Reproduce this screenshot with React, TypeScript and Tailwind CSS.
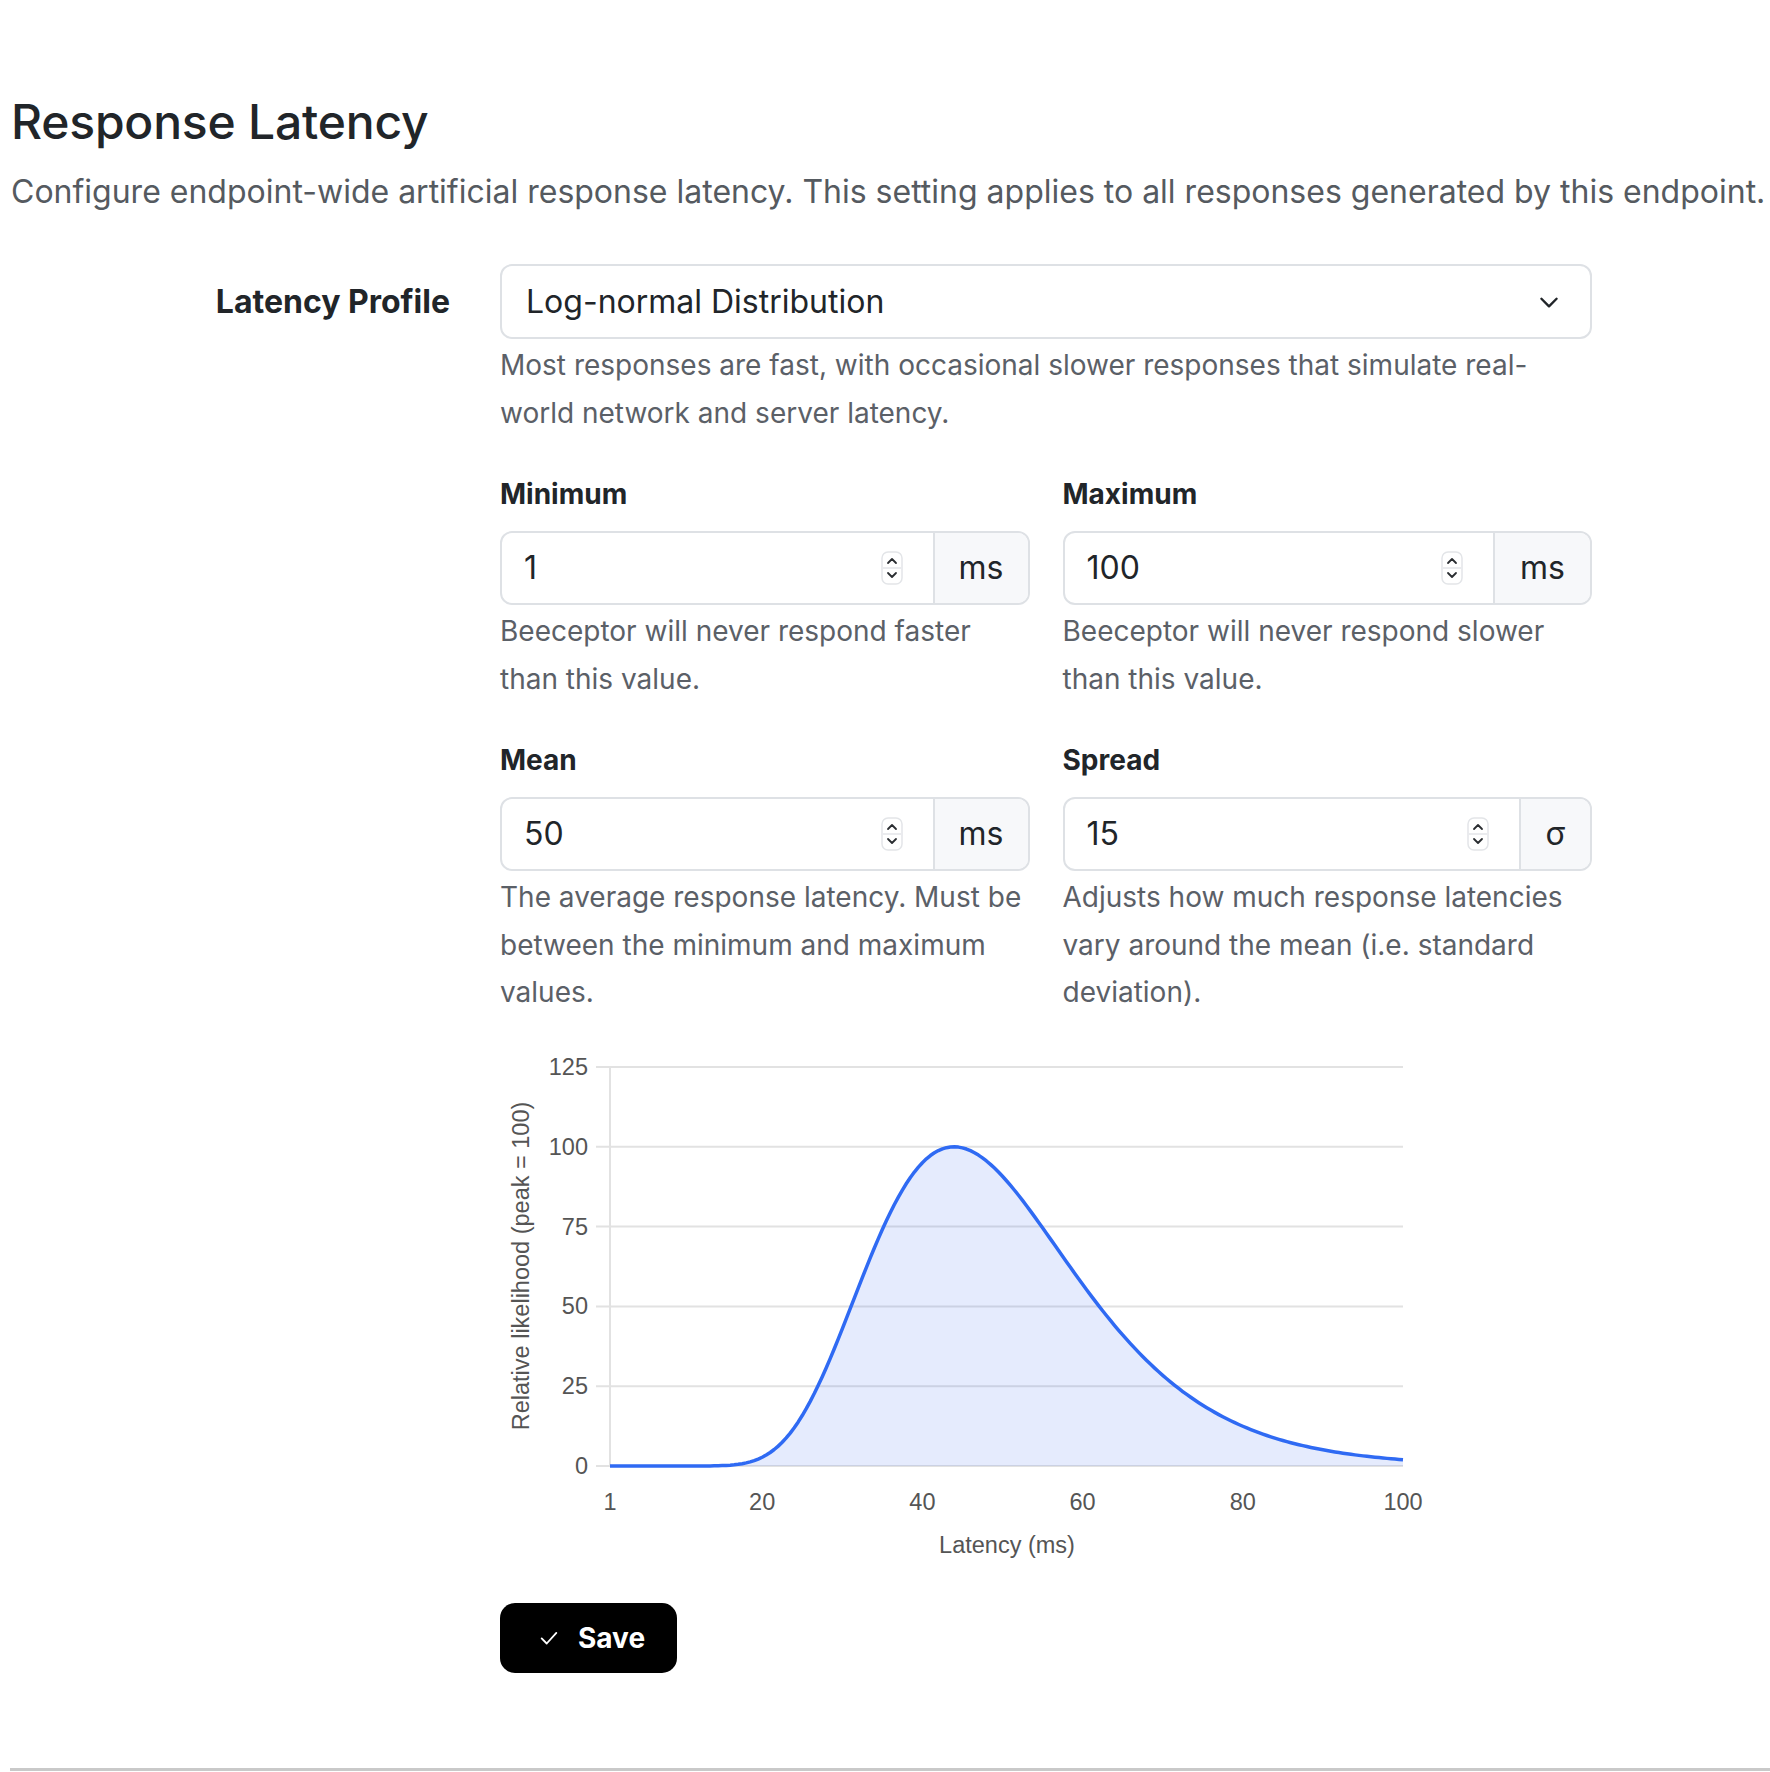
import React from "react";

const MEAN = 50;
const SD = 15;
const sigma2 = Math.log(1 + (SD * SD) / (MEAN * MEAN));
const mu = Math.log(MEAN) - sigma2 / 2;
const mode = Math.exp(mu - sigma2);
const pdf = (x: number) => (1 / x) * Math.exp(-Math.pow(Math.log(x) - mu, 2) / (2 * sigma2));
const peak = pdf(mode);

const XL = 110;
const XR = 903;
const Y0 = 426;
const Y125 = 27;
const sx = (v: number) => XL + ((v - 1) / 99) * (XR - XL);
const sy = (v: number) => Y0 - (v / 125) * (Y0 - Y125);

const chartFont = "'Liberation Sans', Arial, sans-serif";

function Chart() {
  const pts: [number, number][] = [];
  for (let v = 1; v <= 100.001; v += 0.5) {
    pts.push([sx(v), sy((100 * pdf(v)) / peak)]);
  }
  const line = pts.map((p, i) => `${i === 0 ? "M" : "L"}${p[0].toFixed(2)},${p[1].toFixed(2)}`).join(" ");
  const area = `${line} L${XR},${Y0} L${XL},${Y0} Z`;
  const yTicks = [0, 25, 50, 75, 100, 125];
  const xTicks = [1, 20, 40, 60, 80, 100];
  return (
    <svg width="940" height="530" viewBox="0 0 940 530" className="block">
      {yTicks.map((t) => (
        <line key={t} x1={96} x2={XR} y1={sy(t)} y2={sy(t)} stroke="#e2e2e2" strokeWidth={2} />
      ))}
      <line x1={XL} x2={XL} y1={Y125} y2={Y0} stroke="#e2e2e2" strokeWidth={2} />
      <path d={area} fill="#3366ee" fillOpacity={0.13} />
      <path d={line} fill="none" stroke="#2f6af3" strokeWidth={3.5} strokeLinejoin="round" />
      {yTicks.map((t) => (
        <text
          key={t}
          x={88}
          y={sy(t)}
          textAnchor="end"
          dominantBaseline="central"
          fontFamily={chartFont}
          fontSize={23.5}
          fill="#555555"
        >
          {t}
        </text>
      ))}
      {xTicks.map((t) => (
        <text
          key={t}
          x={sx(t)}
          y={462}
          textAnchor="middle"
          dominantBaseline="central"
          fontFamily={chartFont}
          fontSize={23.5}
          fill="#555555"
        >
          {t}
        </text>
      ))}
      <text
        x={507}
        y={505}
        textAnchor="middle"
        dominantBaseline="central"
        fontFamily={chartFont}
        fontSize={23.5}
        fill="#555555"
      >
        Latency (ms)
      </text>
      <text
        x={21}
        y={226}
        transform="rotate(-90 21 226)"
        textAnchor="middle"
        dominantBaseline="central"
        fontFamily={chartFont}
        fontSize={23.5}
        fill="#555555"
      >
        Relative likelihood (peak = 100)
      </text>
    </svg>
  );
}

function Spinner() {
  return (
    <svg width="22" height="34" viewBox="0 0 22 34" className="shrink-0">
      <rect x="1" y="1" width="20" height="32" rx="6" fill="#ffffff" stroke="#e3e5e8" strokeWidth="1.5" />
      <line x1="2" x2="20" y1="17" y2="17" stroke="#e3e5e8" strokeWidth="1.5" />
      <path d="M7 12 L11 8 L15 12" fill="none" stroke="#2a2d31" strokeWidth="1.8" strokeLinecap="round" strokeLinejoin="round" />
      <path d="M7 22 L11 26 L15 22" fill="none" stroke="#2a2d31" strokeWidth="1.8" strokeLinecap="round" strokeLinejoin="round" />
    </svg>
  );
}

function NumberField({
  label,
  value,
  unit,
  unitWidth,
  help,
}: {
  label: string;
  value: string;
  unit: string;
  unitWidth: string;
  help: string;
}) {
  return (
    <div className="flex flex-col">
      <div className="text-[28px] leading-[36px] font-bold text-[#212529]">{label}</div>
      <div className="mt-[19px] flex h-[74px] rounded-[12px] border-2 border-[#dee1e5] overflow-hidden">
        <div className="flex flex-1 items-center pl-[22px] pr-[30px]">
          <span className="flex-1 text-[32px] text-[#212529]">{value}</span>
          <Spinner />
        </div>
        <div
          className={`${unitWidth} flex items-center justify-center border-l-2 border-[#dee1e5] bg-[#f7f8fa] text-[32px] text-[#212529]`}
        >
          {unit}
        </div>
      </div>
      <p className="mt-[3px] text-[28px] leading-[47.5px] text-[#5b6067]">{help}</p>
    </div>
  );
}

export default function App() {
  return (
    <div className="min-h-screen bg-white font-['Inter',sans-serif] flex flex-col">
      <div className="pl-[11px]">
        <h1 className="pt-[93px] text-[48px] leading-[58px] font-medium text-[#212529] tracking-[-0.2px]">
          Response Latency
        </h1>
        <p className="mt-[21px] text-[32px] leading-[40px] text-[#555a60] whitespace-nowrap">
          Configure endpoint-wide artificial response latency. This setting applies to all responses generated by this
          endpoint.
        </p>
        <div className="mt-[52px] flex">
          <div className="w-[439px] h-[75px] flex items-center justify-end text-[32px] font-bold text-[#212529]">
            Latency Profile
          </div>
          <div className="ml-[50px] w-[1092px] flex flex-col">
            <div className="flex h-[75px] items-center justify-between rounded-[12px] border-2 border-[#dee1e5] pl-[24px] pr-[28px]">
              <span className="text-[32px] text-[#212529]">Log-normal Distribution</span>
              <svg width="26" height="26" viewBox="0 0 24 24" fill="none" stroke="#212529" strokeWidth="2.2" strokeLinecap="round" strokeLinejoin="round">
                <path d="M5 9 L12 16 L19 9" />
              </svg>
            </div>
            <p className="mt-[3px] text-[28px] leading-[47.5px] text-[#5b6067] pr-[40px]">
              Most responses are fast, with occasional slower responses that simulate real-world network and server
              latency.
            </p>
            <div className="mt-[39px] grid grid-cols-2 gap-x-[33px] gap-y-[39px]">
              <NumberField
                label="Minimum"
                value="1"
                unit="ms"
                unitWidth="w-[95px]"
                help="Beeceptor will never respond faster than this value."
              />
              <NumberField
                label="Maximum"
                value="100"
                unit="ms"
                unitWidth="w-[97px]"
                help="Beeceptor will never respond slower than this value."
              />
              <NumberField
                label="Mean"
                value="50"
                unit="ms"
                unitWidth="w-[95px]"
                help="The average response latency. Must be between the minimum and maximum values."
              />
              <NumberField
                label="Spread"
                value="15"
                unit="σ"
                unitWidth="w-[71px]"
                help="Adjusts how much response latencies vary around the mean (i.e. standard deviation)."
              />
            </div>
            <div className="mt-[23px]">
              <Chart />
            </div>
            <div className="mt-[33px]">
              <button className="flex h-[70px] w-[177px] items-center rounded-[15px] bg-black pl-[38px] text-white">
                <svg width="22" height="22" viewBox="0 0 24 24" fill="none" stroke="#ffffff" strokeWidth="2" strokeLinecap="round" strokeLinejoin="round">
                  <path d="M4 12.5 L9.5 18 L20 6.5" />
                </svg>
                <span className="ml-[18px] text-[28px] font-bold">Save</span>
              </button>
            </div>
          </div>
        </div>
      </div>
      <div className="mt-[95px] ml-[10px] h-[3px] bg-[#c9c9c9]" />
    </div>
  );
}
